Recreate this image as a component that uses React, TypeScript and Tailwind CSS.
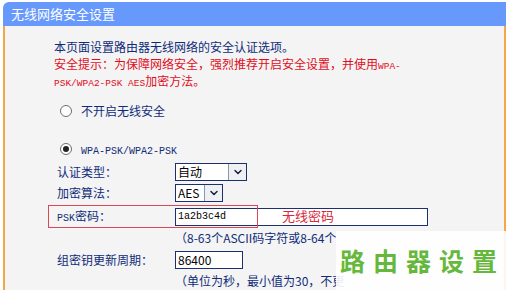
import { ChevronDown } from "lucide-react";

const cjk = "font-['SimSun','Noto_Sans_CJK_SC',sans-serif]";
const mono = "font-['Liberation_Mono','Noto_Sans_CJK_SC',monospace]";

function Select({ value, width, btn }: { value: string; width: string; btn: string }) {
  return (
    <div className={`flex h-[18px] ${width} border border-[#1c2f6e] bg-white`}>
      <span className="h-[16px] flex-1 overflow-hidden pl-[2px] text-[12px] leading-[16px] text-black">{value}</span>
      <span className={`flex ${btn} items-center justify-center border-l border-[#8a96b4] bg-[#eef0f4]`}>
        <ChevronDown size={12} strokeWidth={3} className="text-[#1c2040]" />
      </span>
    </div>
  );
}

function Row({ label, children, className = "" }: { label: React.ReactNode; children: React.ReactNode; className?: string }) {
  return (
    <div className={`flex h-[18px] items-center ${className}`}>
      <div className="w-[118px] text-[12px] leading-[16px]">{label}</div>
      {children}
    </div>
  );
}

function Radio({ checked, children, className = "" }: { checked?: boolean; children: React.ReactNode; className?: string }) {
  return (
    <div className={`flex h-[20px] items-center pl-[6px] ${className}`}>
      <span className="flex h-[12px] w-[12px] items-center justify-center rounded-full border border-[#6e6e6e] bg-white">
        {checked && <span className="h-[6px] w-[6px] rounded-full bg-[#222]" />}
      </span>
      <span className="ml-[9px] leading-[16px]">{children}</span>
    </div>
  );
}

export default function App() {
  return (
    <div className={`relative h-[290px] w-[509px] overflow-hidden bg-white px-[3px] pt-[2px] ${cjk}`}>
      {/* Header */}
      <div className="flex h-[24px] items-center rounded-tl-[6px] bg-[#6699fb] pl-[8px] text-[13px] text-white">
        无线网络安全设置
      </div>

      {/* Panel */}
      <div className="flex h-[270px] flex-col border-x-2 border-[#f2a74a] bg-[#f4f4f4] pl-[49px] pt-[12px] text-[#102c78]">
        <p className="h-[17px] overflow-hidden text-[12px] leading-[17px]">本页面设置路由器无线网络的安全认证选项。</p>
        <p className="h-[17px] overflow-hidden text-[12px] leading-[17px] text-[#e00d1e]">
          安全提示：为保障网络安全，强烈推荐开启安全设置，并使用
          <span className={`${mono} text-[9.5px]`}>WPA-</span>
        </p>
        <p className="h-[17px] overflow-hidden text-[12px] leading-[17px] text-[#e00d1e]">
          <span className={`${mono} text-[9.5px]`}>PSK/WPA2-PSK AES</span>加密方法。
        </p>

        <Radio className="mt-[12px] text-[12px]">不开启无线安全</Radio>
        <Radio checked className="mt-[18px]">
          <span className={`${mono} text-[10px]`}>WPA-PSK/WPA2-PSK</span>
        </Radio>

        <div className="ml-[3px] flex flex-col">
          <Row label="认证类型：" className="mt-[4px]">
            <Select value="自动" width="w-[72px]" btn="w-[18px]" />
          </Row>
          <Row label="加密算法：" className="mt-[3px]">
            <Select value="AES" width="w-[48px]" btn="w-[18px]" />
          </Row>
          <Row label={<><span className={`${mono} text-[10px]`}>PSK</span>密码：</>} className="mt-[6px]">
            <div className={`h-[18px] w-[253px] border border-[#1c2f6e] bg-white pl-[2px] text-[10px] leading-[16px] text-black ${mono}`}>
              1a2b3c4d
            </div>
          </Row>
          <div className="ml-[118px] mt-[4px] h-[16px] whitespace-nowrap text-[12px] leading-[16px]">（8-63个ASCII码字符或8-64个</div>
          <Row label="组密钥更新周期：" className="mt-[5px]">
            <div className="h-[18px] w-[68px] border border-[#1c2f6e] bg-white pl-[2px] text-[12px] leading-[16px] text-black">
              86400
            </div>
          </Row>
          <div className="ml-[118px] mt-[4px] h-[16px] whitespace-nowrap text-[12px] leading-[16px]">（单位为秒，最小值为30，不更</div>
        </div>
      </div>

      {/* Annotation */}
      <div className="absolute left-[48px] top-[205px] h-[23px] w-[210px] border border-[#d8475a]" />
      <div className="absolute left-[282px] top-[207px] text-[13px] leading-[18px] text-[#d8283a]">无线密码</div>

      {/* Watermark */}
      <div className="absolute left-[336px] top-[231px] flex h-[59px] w-[173px] items-center justify-center bg-white/90">
        <span className="text-[25px] font-bold tracking-[8px] text-[#66b83c]">路由器设置</span>
      </div>
    </div>
  );
}
